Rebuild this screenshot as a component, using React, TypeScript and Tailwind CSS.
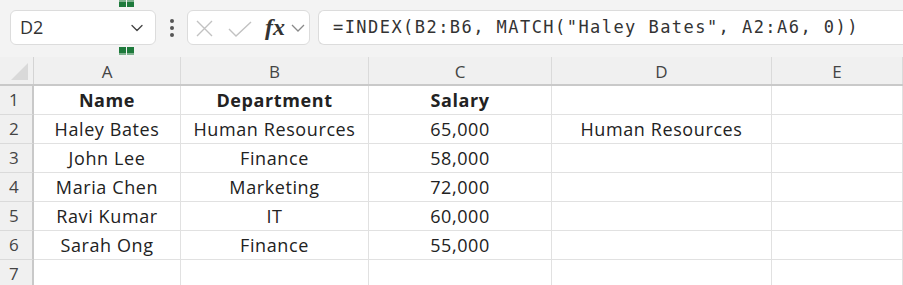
import { ChevronDown } from 'lucide-react'

const cols = [
  { key: 'A', w: 'w-[147px]' },
  { key: 'B', w: 'w-[188px]' },
  { key: 'C', w: 'w-[183px]' },
  { key: 'D', w: 'w-[220px]' },
  { key: 'E', w: 'flex-1' },
]

const rows: { cells: string[]; bold?: boolean }[] = [
  { cells: ['Name', 'Department', 'Salary', '', ''], bold: true },
  { cells: ['Haley Bates', 'Human Resources', '65,000', 'Human Resources', ''] },
  { cells: ['John Lee', 'Finance', '58,000', '', ''] },
  { cells: ['Maria Chen', 'Marketing', '72,000', '', ''] },
  { cells: ['Ravi Kumar', 'IT', '60,000', '', ''] },
  { cells: ['Sarah Ong', 'Finance', '55,000', '', ''] },
  { cells: ['', '', '', '', ''] },
]

export default function App() {
  return (
    <div className="relative w-[903px] h-[285px] overflow-hidden bg-white font-['Open_Sans',sans-serif] text-[#222]">
      {/* Toolbar */}
      <div className="relative h-[57px] bg-[#f3f3f3] flex items-start pt-[10px] pl-[10px]">
        <div className="w-[146px] h-[35px] rounded-[6px] border border-[#dcdcdc] bg-white flex items-center justify-between pl-[9px] pr-[8px]">
          <span className="text-[18px] text-[#333]">D2</span>
          <ChevronDown className="h-[20px] w-[20px] text-[#444]" strokeWidth={1.6} />
        </div>
        <div className="w-[31px] h-[35px] flex flex-col items-center justify-center gap-[3px]">
          <span className="block w-[4px] h-[4px] rounded-full bg-[#555]" />
          <span className="block w-[4px] h-[4px] rounded-full bg-[#555]" />
          <span className="block w-[4px] h-[4px] rounded-full bg-[#555]" />
        </div>
        <div className="w-[123px] h-[35px] rounded-[6px] border border-[#dcdcdc] bg-white flex items-center pl-[8px]">
          <svg width="17" height="17" viewBox="0 0 17 17" className="mt-[1px]">
            <path d="M1 1 16 16M16 1 1 16" stroke="#c2c2c2" strokeWidth="1.4" fill="none" />
          </svg>
          <svg width="24" height="16" viewBox="0 0 24 16" className="ml-[15px] mt-[2px]">
            <path d="M1 8 8 15 23 1" stroke="#c2c2c2" strokeWidth="1.4" fill="none" />
          </svg>
          <span className="ml-[13px] font-['Liberation_Serif',serif] italic font-semibold text-[24px] leading-none text-[#333] mb-[2px]">
            fx
          </span>
          <svg width="14" height="8" viewBox="0 0 14 8" className="ml-[6px] mt-[1px]">
            <path d="M1 1 7 7 13 1" stroke="#8a8a8a" strokeWidth="1.3" fill="none" />
          </svg>
        </div>
        <div className="ml-[8px] flex-1 h-[35px] rounded-l-[6px] border border-r-0 border-[#dcdcdc] bg-white flex items-center pl-[14px]">
          <span className="font-['DejaVu_Sans_Mono',monospace] text-[17px] tracking-[1.45px] text-[#333] whitespace-nowrap">
            =INDEX(B2:B6, MATCH("Haley Bates", A2:A6, 0))
          </span>
        </div>

        {/* copy marquee grips */}
        <div className="absolute left-[119px] top-0 flex gap-[1px]">
          <div className="flex flex-col">
            <span className="block w-[7px] h-[2px] bg-[#7fb28f]" />
            <span className="block w-[7px] h-[5px] bg-[#1e7a3c]" />
          </div>
          <div className="flex flex-col">
            <span className="block w-[7px] h-[2px] bg-[#7fb28f]" />
            <span className="block w-[7px] h-[5px] bg-[#1e7a3c]" />
          </div>
        </div>
        <div className="absolute left-[119px] top-[47px] flex gap-[1px]">
          <div className="flex flex-col">
            <span className="block w-[7px] h-[6px] bg-[#1e7a3c]" />
            <span className="block w-[7px] h-[2px] bg-[#7fb28f]" />
          </div>
          <div className="flex flex-col">
            <span className="block w-[7px] h-[6px] bg-[#1e7a3c]" />
            <span className="block w-[7px] h-[2px] bg-[#7fb28f]" />
          </div>
        </div>
      </div>

      {/* Column headers */}
      <div className="flex h-[29px] bg-[#f0f0f0] border-b-2 border-[#c9c9c9]">
        <div className="w-[34px] border-r border-[#d4d4d4] relative">
          <svg className="absolute left-[11px] top-[6px]" width="17" height="17" viewBox="0 0 17 17">
            <polygon points="17,0 17,17 0,17" fill="#d9d9d9" />
          </svg>
        </div>
        {cols.map((c) => (
          <div
            key={c.key}
            className={`${c.w} border-r border-[#dadada] flex items-center justify-center text-[17px] text-[#444] pt-[2px]`}
          >
            {c.key}
          </div>
        ))}
      </div>

      {/* Rows */}
      {rows.map((r, i) => (
        <div key={i} className="flex h-[29px]">
          <div className="w-[34px] bg-[#f0f0f0] border-r-2 border-[#c9c9c9] border-b border-b-[#dadada] flex items-center pl-[9px] text-[17px] text-[#444]">
            {i + 1}
          </div>
          {cols.map((c, j) => (
            <div
              key={c.key}
              className={`${c.w} border-r border-b border-[#e1e1e1] flex items-center justify-center text-[18px] tracking-[0.6px] whitespace-nowrap ${r.bold ? 'font-bold' : ''}`}
            >
              {r.cells[j]}
            </div>
          ))}
        </div>
      ))}
    </div>
  )
}
